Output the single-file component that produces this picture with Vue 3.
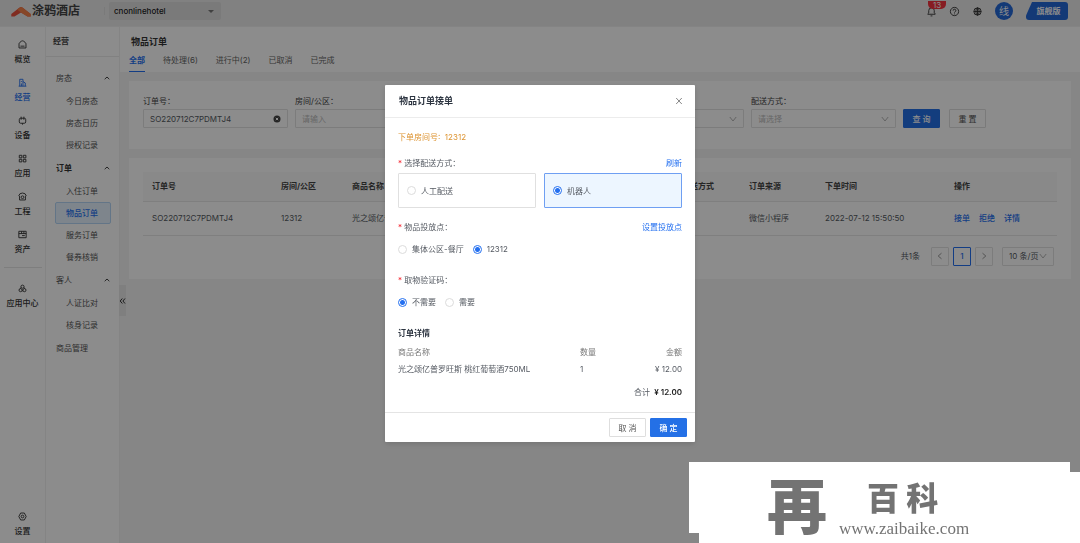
<script setup>
import { ref } from 'vue'

const rail = [
  { name: '概览', icon: 'home' },
  { name: '经营', icon: 'building', active: true },
  { name: '设备', icon: 'device' },
  { name: '应用', icon: 'grid' },
  { name: '工程', icon: 'engineering' },
  { name: '资产', icon: 'asset' },
]
const menu = [
  { name: '房态', items: ['今日房态', '房态日历', '授权记录'] },
  { name: '订单', bold: true, items: ['入住订单', '物品订单', '服务订单', '餐券核销'] },
  { name: '客人', items: ['人证比对', '核身记录'] },
  { name: '商品管理', items: [] },
]
const tabs = ['全部', '待处理(6)', '进行中(2)', '已取消', '已完成']
const product = '光之颂亿普罗旺斯 桃红葡萄酒750ML'
const orderNo = ref('SO220712C7PDMTJ4')
const delivery = ref('robot')
const point = ref('12312')
const code = ref('no')
</script>

<template>
  <div class="page">
    <header class="topbar">
      <div class="brand">
        <svg class="brand-mark" viewBox="0 0 20 13">
          <path d="M.3 9 8.600 2.600Q10 1.600 11.400 2.600L19.700 9V11.500H16.500L10 7.400 3.500 11.500H.3Z" fill="#e9503c" />
          <path d="M10 2.100Q10.800 2.200 11.400 2.600L19.700 9V11.500H16.500L10 7.400 6 4.600Z" fill="#f5824a" />
        </svg>
        <span class="brand-name">涂鸦酒店</span>
      </div>
      <span class="split"></span>
      <button class="hotel" type="button">cnonlinehotel<i class="caret"></i></button>
      <div class="tools">
        <button class="tool bell" type="button" aria-label="通知">
          <svg viewBox="0 0 12 12"><path d="M2 9V8.500L3 7.500V5a3 3 0 0 1 6 0v2.500l1 1V9ZM5 10.800h2" /></svg>
          <span class="badge">13</span>
        </button>
        <button class="tool" type="button" aria-label="帮助">
          <svg viewBox="0 0 12 12"><circle cx="6" cy="6" r="4.500" /><path d="M4.500 5a1.500 1.500 0 1 1 2.200 1.300Q6 6.600 6 7.200M6 8.200v.9" /></svg>
        </button>
        <button class="tool" type="button" aria-label="语言">
          <svg viewBox="0 0 12 12"><circle cx="6" cy="6" r="4" /><ellipse cx="6" cy="6" rx="1.800" ry="4" /><path d="M2 6h8M6 2v8" /></svg>
        </button>
        <span class="avatar">线</span>
        <button class="edition" type="button">旗舰版</button>
      </div>
    </header>

    <div class="shell">
      <nav class="rail">
        <a v-for="r in rail" :key="r.name" href="#" :class="['rail-item', { active: r.active }]">
          <svg viewBox="0 0 12 12">
            <template v-if="r.icon === 'home'"><path d="M2.200 9.800V5.500Q2.200 4.500 3 3.800L4.800 2.400Q6 1.600 7.200 2.400L9 3.800Q9.800 4.500 9.800 5.500V9.800ZM3.800 7.800H8.200" /></template>
            <template v-else-if="r.icon === 'building'"><path d="M3 10V2.500h3.500V10M6.500 5 9 6.500V10M1.800 10h8.400M4.800 4.500v1M4.800 7v3" /></template>
            <template v-else-if="r.icon === 'device'"><path d="M4 3.500H8Q9.500 3.500 9.500 5V7.500Q9.500 9 8 9H4Q2.500 9 2.500 7.500V5Q2.500 3.500 4 3.500ZM4.500 1.800v3.400M7.500 1.800v3.400M6 9v1.500" /></template>
            <template v-else-if="r.icon === 'grid'"><path d="M2.500 2.500h2.800v2.800H2.500ZM6.900 2.500h2.800v2.800H6.900ZM2.500 6.900h2.800v2.800H2.500ZM6.900 6.900h2.800v2.800H6.900Z" /></template>
            <template v-else-if="r.icon === 'engineering'"><path d="M2.800 5.500V9.800H9.200V5.500M1.800 5.500Q2.500 2.200 6 2.200T10.200 5.500" /><circle cx="6" cy="6.800" r="1.500" /></template>
            <template v-else><path d="M2 2.500h8v7H2ZM2 5h8M5 2.500V5M7.500 2.500V5M5.500 7.200h3" /></template>
          </svg>
          <span>{{ r.name }}</span>
        </a>
        <hr class="rail-line" />
        <a href="#" class="rail-item center">
          <svg viewBox="0 0 12 12"><circle cx="6" cy="4" r="1.700" /><circle cx="3.900" cy="7.800" r="1.700" /><circle cx="8.100" cy="7.800" r="1.700" /><path d="M4.500 5 3.200 6.200M7.500 5l1.300 1.200M5.500 8.500h1" /></svg>
          <span>应用中心</span>
        </a>
        <a href="#" class="rail-item bottom">
          <svg viewBox="0 0 12 12"><path d="M4 2.200h4l2 3.800-2 3.800H4L2 6Z" /><circle cx="6" cy="6" r="1.500" /></svg>
          <span>设置</span>
        </a>
      </nav>

      <aside class="side">
        <h2 class="side-title">经营</h2>
        <div class="menu">
          <section v-for="g in menu" :key="g.name">
            <button type="button" :class="['group', { bold: g.bold }]">
              {{ g.name }}
              <svg v-if="g.items.length" viewBox="0 0 8 8"><path d="M1.700 5.200 4 3l2.300 2.200" /></svg>
            </button>
            <a v-for="i in g.items" :key="i" href="#" :class="['entry', { on: i === '物品订单' }]">{{ i }}</a>
          </section>
        </div>
        <button class="fold" type="button" aria-label="收起">
          <svg viewBox="0 0 7 8"><path d="M3.300 1.500 1.200 4l2.100 2.500M6 1.500 3.900 4 6 6.500" /></svg>
        </button>
      </aside>

      <main class="main">
        <div class="page-head">
          <h1>物品订单</h1>
          <nav class="tabs">
            <a v-for="(t, i) in tabs" :key="t" href="#" :class="{ current: i === 0 }">{{ t }}</a>
          </nav>
        </div>

        <form class="card search" @submit.prevent>
          <div class="field">
            <label for="order-no">订单号：</label>
            <div class="box">
              <input id="order-no" v-model="orderNo" type="text" />
              <svg class="clear" viewBox="0 0 8 8"><circle cx="4" cy="4" r="3.500" /><path d="m2.800 2.800 2.400 2.400M5.200 2.800 2.800 5.200" /></svg>
            </div>
          </div>
          <div class="field">
            <label for="room">房间/公区：</label>
            <div class="box"><input id="room" type="text" placeholder="请输入" /></div>
          </div>
          <div class="field fourth">
            <div class="box">
              <select aria-label="订单来源"></select>
              <svg class="chev" viewBox="0 0 8 8"><path d="m.8 2 3.200 4 3.200-4" /></svg>
            </div>
          </div>
          <div class="field">
            <label for="way">配送方式：</label>
            <div class="box">
              <select id="way" class="empty"><option>请选择</option></select>
              <svg class="chev" viewBox="0 0 8 8"><path d="m.8 2 3.200 4 3.200-4" /></svg>
            </div>
          </div>
          <div class="actions">
            <button class="btn primary" type="submit">查 询</button>
            <button class="btn" type="reset">重 置</button>
          </div>
        </form>

        <section class="card list">
          <table class="orders">
            <colgroup>
              <col class="c-no" /><col class="c-room" /><col /><col class="c-way" /><col class="c-src" /><col class="c-time" /><col class="c-op" />
            </colgroup>
            <thead>
              <tr><th>订单号</th><th>房间/公区</th><th>商品名称</th><th>配送方式</th><th>订单来源</th><th>下单时间</th><th>操作</th></tr>
            </thead>
            <tbody>
              <tr>
                <td>SO220712C7PDMTJ4</td><td>12312</td><td>{{ product }}</td><td></td><td>微信小程序</td><td>2022-07-12 15:50:50</td>
                <td><div class="ops"><a href="#">接单</a><a href="#">拒绝</a><a href="#">详情</a></div></td>
              </tr>
            </tbody>
          </table>
          <div class="pager">
            <span class="total">共1条</span>
            <button type="button" aria-label="上一页"><svg viewBox="0 0 8 8"><path d="M5.500 1.200 2.200 4l3.300 2.800" /></svg></button>
            <button type="button" class="now">1</button>
            <button type="button" aria-label="下一页"><svg viewBox="0 0 8 8"><path d="M2.500 1.200 5.800 4 2.500 6.800" /></svg></button>
            <div class="box size">
              <select aria-label="每页条数"><option>10 条/页</option></select>
              <svg class="chev" viewBox="0 0 8 8"><path d="m.8 2 3.200 4 3.200-4" /></svg>
            </div>
          </div>
        </section>
      </main>
    </div>

    <div class="mask">
      <div class="modal" role="dialog" aria-labelledby="dlg-title">
        <div class="modal-head">
          <h2 id="dlg-title">物品订单接单</h2>
          <button type="button" aria-label="关闭"><svg viewBox="0 0 8 8"><path d="m1.200 1 5.600 6M6.800 1 1.200 7" /></svg></button>
        </div>
        <div class="modal-body">
          <p class="room-no">下单房间号:&nbsp; 12312</p>
          <div class="row"><span class="req">选择配送方式：</span><a href="#">刷新</a></div>
          <div class="choices">
            <label :class="{ on: delivery === 'human' }"><input v-model="delivery" type="radio" name="delivery" value="human" />人工配送</label>
            <label :class="{ on: delivery === 'robot' }"><input v-model="delivery" type="radio" name="delivery" value="robot" />机器人</label>
          </div>
          <div class="row spaced"><span class="req">物品投放点：</span><a href="#">设置投放点</a></div>
          <div class="radios">
            <label><input v-model="point" type="radio" name="point" value="area" />集体公区-餐厅</label>
            <label><input v-model="point" type="radio" name="point" value="12312" />12312</label>
          </div>
          <div class="row verify"><span class="req">取物验证码：</span></div>
          <div class="radios">
            <label><input v-model="code" type="radio" name="code" value="no" />不需要</label>
            <label><input v-model="code" type="radio" name="code" value="yes" />需要</label>
          </div>
          <h3>订单详情</h3>
          <table class="detail">
            <thead><tr><th>商品名称</th><th class="qty">数量</th><th class="sum">金额</th></tr></thead>
            <tbody><tr><td>{{ product }}</td><td>1</td><td class="sum">¥ 12.00</td></tr></tbody>
          </table>
          <p class="grand">合计 <b>¥ 12.00</b></p>
        </div>
        <div class="modal-foot">
          <button class="btn" type="button">取 消</button>
          <button class="btn primary" type="button">确 定</button>
        </div>
      </div>
    </div>

    <div class="stamp">
      <span class="stamp-mark">再</span>
      <span class="stamp-side"><span class="stamp-name">百 科</span><span class="stamp-url">www.zaibaike.com</span></span>
    </div>
  </div>
</template>

<style>
body { margin: 0; overflow: hidden; }
</style>

<style scoped>
.page {
  min-height: 100vh;
  display: flex;
  flex-direction: column;
  background: #f5f5f5;
  font: 8px/12px Inter, "Noto Sans CJK SC", sans-serif;
  color: #555a62;
}
* { box-sizing: border-box; }
h1, h2, h3, p { margin: 0; font-size: 9px; }
a { color: #2470f0; text-decoration: none; }
button, input, select { font: inherit; color: inherit; margin: 0; padding: 0; background: none; border: 0; outline: 0; border-radius: 0; }
input, select { appearance: none; width: 100%; min-width: 0; opacity: 1; }
svg { fill: none; stroke: currentColor; stroke-width: 1; flex: none; display: block; }
table { border-collapse: collapse; table-layout: fixed; width: 100%; }
th { text-align: left; }

.topbar { height: 27px; display: flex; align-items: center; background: #ebebeb; padding: 0 12px 4px 11px; border-bottom: 1px solid #f0f0f0; }
.brand { display: flex; align-items: center; gap: 1px; width: 93px; }
.brand-mark { width: 20px; height: 13px; stroke: none; }
.brand-name { font-size: 12px; line-height: 18px; font-weight: 700; color: #444; white-space: nowrap; }
.split { width: 1px; height: 8px; background: #dedede; }
.hotel { display: flex; align-items: center; justify-content: space-between; width: 112px; height: 18px; margin-left: 4px; padding: 0 7px 0 5px; background: #dedede; border-radius: 2px; font-weight: 500; color: #222; }
.caret { border: 3px solid transparent; border-top-color: #777; border-bottom: 0; }
.tools { margin-left: auto; display: flex; align-items: center; gap: 12px; }
.tool { position: relative; color: #333; }
.tool svg { width: 11px; height: 11px; }
.badge { position: absolute; left: 2px; top: -5px; width: 18px; height: 8px; border-radius: 0 0 5px 5px; background: #f5333f; color: #fff; line-height: 8px; text-align: center; }
.avatar { width: 18px; height: 18px; border-radius: 9px; background: #2468d8; color: #fff; font-size: 10px; line-height: 18px; text-align: center; }
.edition { width: 42px; height: 18px; margin-left: 1px; padding-left: 3px; background: #2468d8; color: #fff; font-weight: 700; border-radius: 3px; clip-path: polygon(6px 0, 100% 0, 100% 100%, 0 100%, 0 75%); }

.shell { flex: 1; display: flex; }
.rail { width: 46px; flex: none; background: #fff; border-right: 1px solid #f0f0f0; padding-top: 12px; display: flex; flex-direction: column; align-items: stretch; }
.rail-item { height: 38px; display: flex; flex-direction: column; align-items: center; gap: 3px; color: #333; font-weight: 500; white-space: nowrap; }
.rail-item svg { width: 11px; height: 11px; }
.rail-item.active { color: #2470f0; }
.rail-line { width: 38px; height: 1px; margin: 0 auto; border: 0; background: #e6e6e6; }
.center { margin-top: 15px; }
.bottom { margin-top: auto; height: 32px; }

.side { position: relative; width: 74px; flex: none; background: #fff; border-right: 1px solid #f0f0f0; }
.side-title { height: 30px; padding: 8px 0 0 7px; font-size: 8px; border-bottom: 1px solid #ececec; color: #444; }
.menu { padding: 9px 8px 9px 9px; }
.group { width: 100%; height: 24px; padding: 0 0 0 1px; display: flex; align-items: center; justify-content: space-between; color: #555; }
.group.bold { font-weight: 700; color: #333; }
.group svg { width: 8px; height: 8px; color: #444; }
.entry { display: block; height: 22px; line-height: 20px; padding-left: 10px; color: #555; border: 1px solid transparent; border-radius: 2px; }
.entry.on { background: #e6f3ff; border-color: #b4d6f6; color: #2470f0; font-weight: 500; }
.fold { position: absolute; left: 100%; top: 258px; width: 7px; height: 31px; background: #e8e8e8; color: #333; }
.fold svg { width: 7px; height: 8px; }

.main { flex: 1; min-width: 0; }
.page-head { background: #fff; height: 45px; padding: 8px 9px 0; }
.page-head h1 { line-height: 14px; padding-left: 2px; color: #333; }
.tabs { display: flex; gap: 18px; margin-top: 5px; }
.tabs a { height: 18px; line-height: 12px; color: #666; }
.tabs .current { color: #2470f0; font-weight: 700; border-bottom: 1px solid #2470f0; }
.card { background: #fff; margin: 9px 9px 0; padding: 14px 14px; }
.search { display: grid; grid-template-columns: repeat(6, 1fr); gap: 7px; padding-right: 23px; align-items: end; padding-bottom: 21px; }
.field label { display: block; height: 14px; color: #444; }
.fourth { grid-column: 4; }
.box { display: flex; align-items: center; height: 19px; border: 1px solid #e2e2e2; border-radius: 1px; padding: 0 6px; gap: 4px; }
.box input::placeholder { color: #bbb; opacity: 1; }
.box .empty { color: #bbb; }
.clear { width: 8px; height: 8px; fill: #444; stroke: none; }
.clear path { stroke: #fff; }
.chev { width: 8px; height: 8px; color: #b4b4b4; }
.actions { display: flex; gap: 9px; }
.btn { width: 37px; flex: none; height: 19px; border: 1px solid #dedede; border-radius: 1px; background: #fff; white-space: nowrap; color: #555; }
.btn.primary { background: #2470e6; border-color: #2470e6; color: #fff; font-weight: 500; }

.list { padding-bottom: 13px; }
.orders th { height: 29px; padding: 0 0 0 9px; background: #fafafa; border-bottom: 1px solid #e8e8e8; font-weight: 700; color: #444; white-space: nowrap; }
.orders td { height: 34px; padding: 0 0 0 9px; border-bottom: 1px solid #e8e8e8; white-space: nowrap; overflow: hidden; }
.c-no { width: 129px; }
.c-room { width: 71px; }
.c-way { width: 67px; }
.c-src { width: 76px; }
.c-time { width: 129px; }
.c-op { width: 112px; }
.ops { display: flex; gap: 9px; font-weight: 500; }
.pager { display: flex; justify-content: flex-end; align-items: center; gap: 4px; padding-right: 3px; margin-top: 11px; }
.total { margin-right: 7px; }
.pager button { width: 18px; height: 19px; border: 1px solid #e2e2e2; border-radius: 1px; display: grid; place-items: center; color: #999; }
.pager button svg { width: 8px; height: 8px; }
.pager button.now { border-color: #2470f0; color: #2470f0; font-weight: 500; }
.size { width: 52px; margin-left: 5px; gap: 0; }
.size select { flex: 1; }

.mask { position: fixed; inset: 0; background: rgba(0, 0, 0, 0.45); padding-top: 85px; }
.modal { width: 310px; margin: 0 auto; background: #fff; border-radius: 1px; box-shadow: 0 2px 6px rgba(0, 0, 0, 0.15); }
.modal-head { display: flex; align-items: center; justify-content: space-between; height: 33px; padding: 0 12px 0 14px; border-bottom: 1px solid #ececec; }
.modal-head h2 { color: #2c3440; }
.modal-head button { color: #888; }
.modal-head svg { width: 8px; height: 8px; }
.modal-body { padding: 13px 13px 14px; }
.room-no { font-size: 8px; color: #dd9330; margin-bottom: 14px; }
.row { display: flex; justify-content: space-between; }
.spaced { margin-top: 13px; }
.verify { margin-top: 19px; }
.req::before { content: "* "; color: #f5222d; }
.choices { display: grid; grid-template-columns: 1fr 1fr; gap: 8px; margin-top: 4px; }
.choices label { display: flex; align-items: center; gap: 5px; height: 35px; padding-left: 8px; border: 1px solid #e0e0e0; border-radius: 1px; }
.choices .on { background: #edf6ff; border-color: #6f9ff2; }
input[type="radio"] { width: 9px; height: 9px; flex: none; border: 1px solid #dcdcdc; border-radius: 50%; background: #fff; }
input[type="radio"]:checked { border-color: #2470f0; background: radial-gradient(circle, #2470f0 2px, #fff 3px); }
.radios { display: flex; gap: 9px; margin-top: 10px; }
.radios label { display: flex; align-items: center; gap: 5px; }
h3 { font-size: 8px; line-height: 12px; margin: 19px 0 4px; color: #2c3440; }
.detail th, .detail td { padding: 0; height: 17px; font-weight: 400; white-space: nowrap; }
.detail th { color: #777; }
.qty { width: 51px; }
.detail .sum { text-align: right; width: 51px; }
.grand { margin-top: 9px; font-size: 8px; text-align: right; }
.grand b { margin-left: 2px; font-weight: 600; color: #222; }
.modal-foot { display: flex; justify-content: flex-end; gap: 4px; padding: 5px 8px; border-top: 1px solid #e4e4e4; }

.stamp { position: fixed; right: 0; bottom: 0; width: 391px; height: 81px; padding-left: 78px; display: flex; align-items: center; gap: 12px; color: #737373; isolation: isolate; }
.stamp::before { content: ""; position: absolute; inset: 0; z-index: -1; background: #fff; clip-path: polygon(0 0, 381px 0, 381px 10px, 100% 10px, 100% 100%, 10px 100%, 10px 71px, 0 71px); }
.stamp-mark { font: 900 60px/80px "Noto Sans CJK SC", sans-serif; }
.stamp-side { display: flex; flex-direction: column; padding-top: 7px; }
.stamp-name { font: 900 32px/46px "Noto Sans CJK SC", sans-serif; padding-left: 28px; }
.stamp-url { font: 17px/20px "Liberation Serif", serif; }
</style>
